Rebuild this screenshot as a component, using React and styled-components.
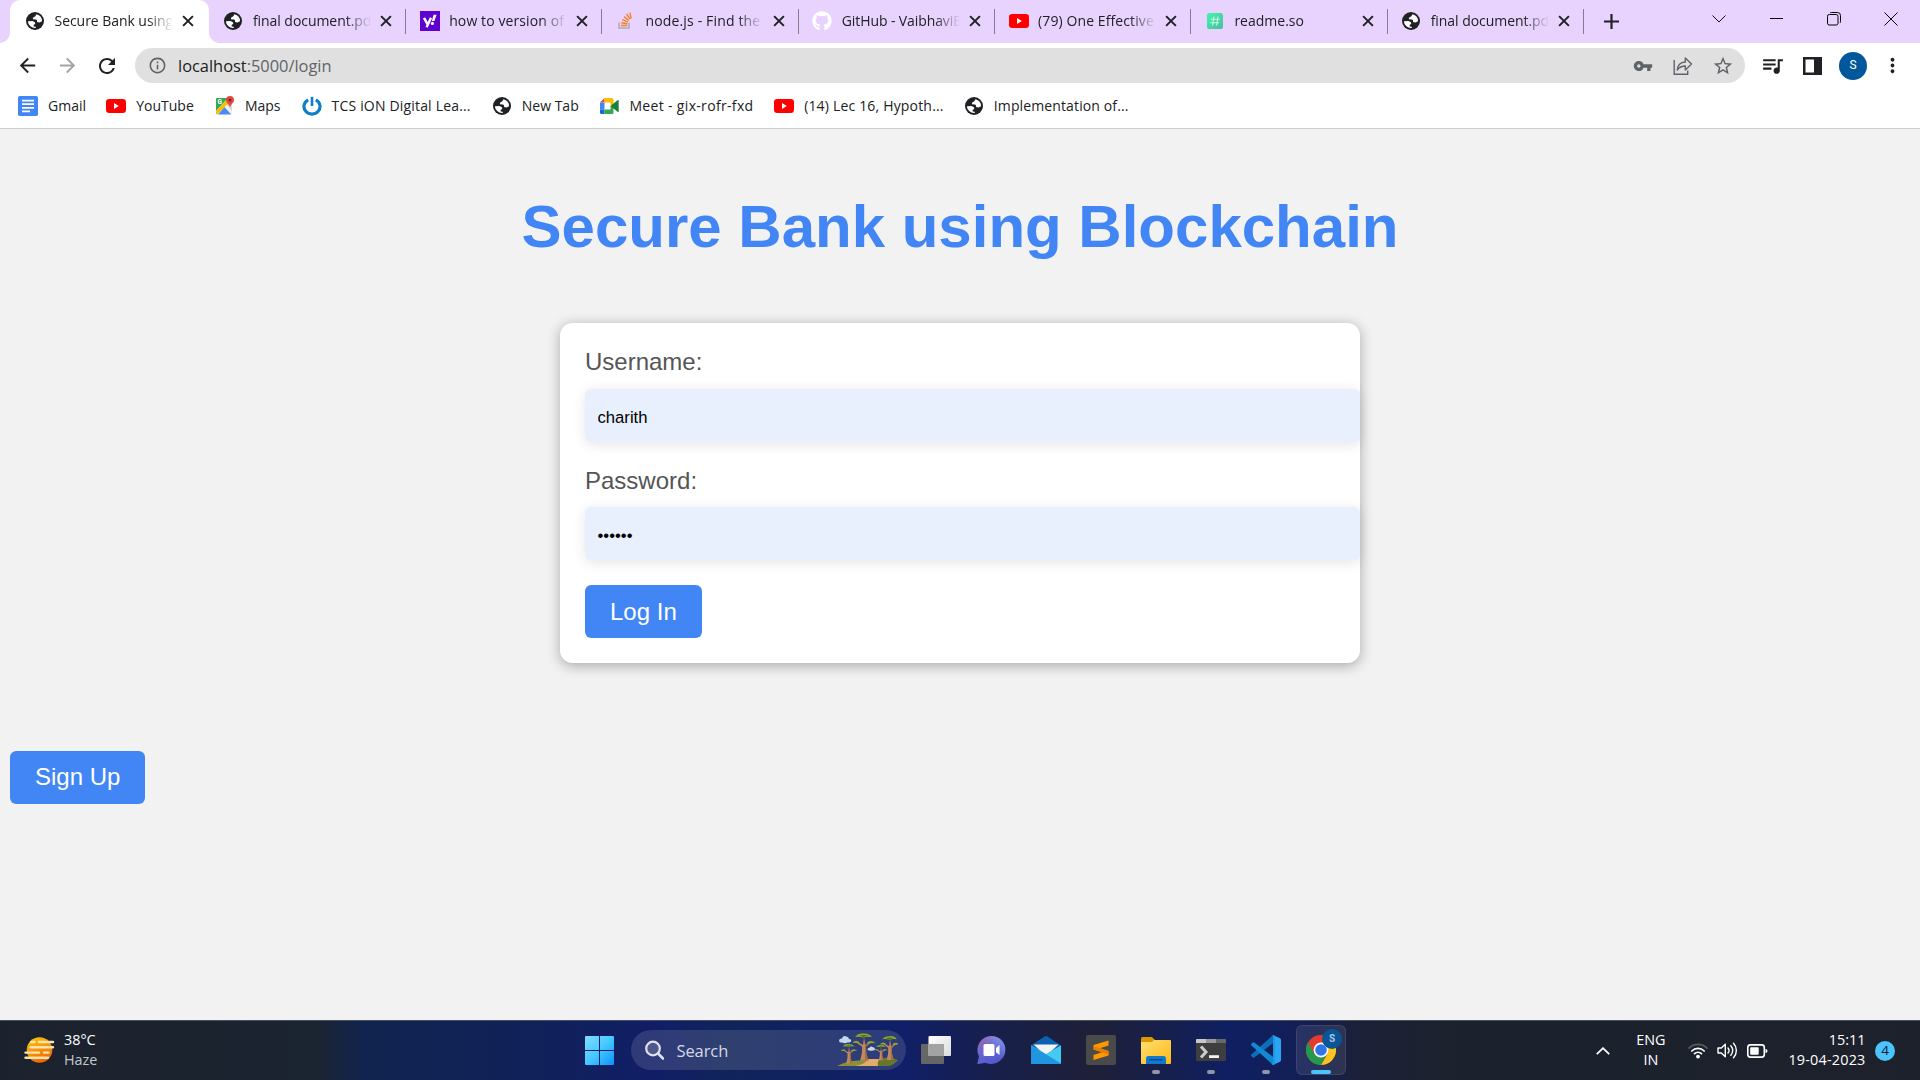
import React from "react";
import styled, { createGlobalStyle } from "styled-components";
import {
  MdArrowBack,
  MdArrowForward,
  MdRefresh,
  MdInfoOutline,
  MdVpnKey,
  MdStarBorder,
  MdQueueMusic,
  MdMoreVert,
} from "react-icons/md";
import { FaGithub } from "react-icons/fa";

const GlobalStyle = createGlobalStyle`
  * { box-sizing: border-box; }
  body { margin: 0; overflow: hidden; background: #f2f2f2; }
`;

const ui = `"Open Sans", "Noto Sans", sans-serif`;
const arial = `Arial, "Liberation Sans", sans-serif`;

/* ---------- window ---------- */

const Window = styled.div`
  width: 1920px;
  height: 1080px;
  display: flex;
  flex-direction: column;
  overflow: hidden;
  font-family: ${ui};
`;

/* ---------- tab strip ---------- */

const TabStrip = styled.div`
  height: 43px;
  flex: none;
  display: flex;
  background: #e8d3fe;
  padding-left: 10px;
`;

const Tab = styled.div`
  position: relative;
  width: ${(p) => (p.$active ? 199.4 : 196.3)}px;
  flex: none;
  display: flex;
  align-items: center;
  padding: 0 14px 2px ${(p) => (p.$active ? 15 : 14)}px;
  background: ${(p) => (p.$active ? "#fff" : "transparent")};
  border-radius: 10px 10px 0 0;

  ${(p) =>
    p.$active
      ? `
    &::before, &::after {
      content: "";
      position: absolute;
      bottom: 0;
      width: 10px;
      height: 10px;
    }
    &::before { left: -10px; background: radial-gradient(circle at 0 0, transparent 9.5px, #fff 10px); }
    &::after { right: -10px; background: radial-gradient(circle at 100% 0, transparent 9.5px, #fff 10px); }
  `
      : `
    &::after {
      content: "";
      position: absolute;
      right: -0.5px;
      top: 9px;
      width: 1px;
      height: 25px;
      background: #877b94;
    }
  `}
`;

const Favicon = styled.span`
  width: 20px;
  height: 20px;
  flex: none;
  display: flex;
  align-items: center;
  justify-content: center;
`;

const TabTitle = styled.span`
  margin-left: 9.500px;
  width: 118px;
  flex: none;
  overflow: hidden;
  white-space: nowrap;
  font-size: 14px;
  line-height: 22px;
  letter-spacing: ${(p) => p.$spacing || 0}px;
  color: #202124;
  mask-image: linear-gradient(to right, #000 ${(p) => (p.$fade ? "78%" : "100%")}, transparent 100%);
`;

const TabClose = styled.span`
  margin-left: 9.300px;
  width: 12px;
  display: flex;
`;

const NewTab = styled.div`
  width: 56px;
  display: flex;
  align-items: center;
  justify-content: center;
  padding-bottom: 1px;
`;

const WindowControls = styled.div`
  margin-left: auto;
  display: flex;
  height: 37px;
`;

const ControlButton = styled.div`
  width: 57.3px;
  display: flex;
  align-items: center;
  justify-content: center;
`;

/* ---------- toolbar ---------- */

const Toolbar = styled.div`
  height: 45px;
  flex: none;
  display: flex;
  align-items: center;
  background: #fff;
  padding: 0 8px 0 7px;
`;

const ToolButton = styled.span`
  width: ${(p) => p.$w || 40}px;
  height: 40px;
  flex: none;
  display: flex;
  align-items: center;
  justify-content: center;
  color: ${(p) => p.$color || "#202124"};
`;

const Omnibox = styled.div`
  margin-left: 8px;
  width: 1610px;
  height: 35px;
  flex: none;
  border-radius: 18px;
  background: #e0e0e0;
  display: flex;
  align-items: center;
  padding: 0 2px 0 1px;
`;

const Address = styled.span`
  flex: 1;
  font-size: 16.4px;
  line-height: 22px;
  color: #5f6368;
  b { font-weight: 400; color: #202124; }
`;

const Avatar = styled.span`
  width: 28px;
  height: 28px;
  border-radius: 50%;
  background: #01579b;
  color: #fff;
  font: 12px/27px Roboto, sans-serif;
  text-align: center;
`;

/* ---------- bookmarks ---------- */

const BookmarkBar = styled.div`
  height: 41px;
  flex: none;
  display: flex;
  align-items: center;
  gap: 19.700px;
  background: #fff;
  border-bottom: 1px solid #cfcfcf;
  padding: 0 0 5px 18px;
`;

const Bookmark = styled.div`
  display: flex;
  align-items: center;
  gap: 10px;
`;

const BookmarkLabel = styled.span`
  width: ${(p) => p.$w}px;
  white-space: nowrap;
  font-size: 14px;
  line-height: 22px;
  letter-spacing: ${(p) => p.$spacing || 0}px;
  color: #202124;
`;

/* ---------- page ---------- */

const Page = styled.main`
  flex: 1;
  background: #f2f2f2;
  padding: 0 10px;
  font-family: ${arial};
  display: flex;
  flex-direction: column;
  align-items: flex-start;
`;

const Heading = styled.h1`
  margin: 63px 0 61px;
  align-self: center;
  font-size: 60px;
  line-height: 70px;
  font-weight: 700;
  color: #4286f5;
  white-space: nowrap;
`;

const Card = styled.form`
  align-self: center;
  width: 800px;
  height: 340px;
  padding: 25px 0 0 25px;
  border-radius: 12.5px;
  background: #fff;
  box-shadow: 0 2.5px 12.5px rgba(0, 0, 0, 0.3);
  display: flex;
  flex-direction: column;
  align-items: flex-start;
`;

const Label = styled.label`
  font-size: 24px;
  line-height: 28px;
  color: #555;
  margin-bottom: ${(p) => p.$bottom}px;
`;

const Input = styled.input`
  width: 775px;
  height: 53px;
  margin: 0 0 25px;
  padding: 15px 12.5px 11px;
  border: 0;
  outline: 0;
  border-radius: 6.25px;
  background: #e8effd;
  box-shadow: 0 2.5px 12.5px rgba(0, 0, 0, 0.1);
  font: 16.67px ${arial};
  color: #000;
`;

const Button = styled.button`
  height: 53px;
  padding: 0 25px ${(p) => p.$lift || 0}px;
  border: 0;
  border-radius: 6.25px;
  background: #4286f5;
  color: #fff;
  font: 24px/28px ${arial};
  margin-top: ${(p) => p.$top || 0}px;
`;

/* ---------- taskbar ---------- */

const Taskbar = styled.footer`
  height: 60px;
  flex: none;
  display: flex;
  align-items: stretch;
  border-top: 1px solid #45505e;
  background: linear-gradient(
    to right,
    #1c222d 0%,
    #1b2431 16.5%,
    #11244f 19%,
    #11215a 28%,
    #111e66 34%,
    #11245a 38%,
    #101f68 47%,
    #18204a 52%,
    #1f2038 57%,
    #182049 60%,
    #0f1f62 64%,
    #131f54 68%,
    #1c2036 71%,
    #1b222d 76%,
    #1d212b 100%
  );
`;

const Weather = styled.div`
  width: 585px;
  padding-left: 24px;
  display: flex;
  align-items: center;
  gap: 9px;
`;

const Stack = styled.div`
  display: flex;
  flex-direction: column;
  align-items: ${(p) => p.$align || "flex-start"};
  width: ${(p) => (p.$w ? `${p.$w}px` : "auto")};
  margin-right: ${(p) => p.$right || 0}px;
  font-size: 14.4px;
  line-height: 20px;
  padding-bottom: 1px;
  color: #fff;
  white-space: nowrap;
`;

const Line = styled.span`
  letter-spacing: ${(p) => p.$spacing || 0}px;
  color: ${(p) => (p.$dim ? "#c3c6cb" : "#fff")};
`;

const StartButton = styled.div`
  width: 29px;
  display: flex;
  align-items: center;
`;

const Search = styled.div`
  width: 275px;
  height: 40px;
  margin: 9px 0 0 17px;
  padding: 0 8px 0 14px;
  border-radius: 20px;
  background: rgba(255, 255, 255, 0.13);
  display: flex;
  align-items: center;
`;

const SearchText = styled.span`
  flex: 1;
  margin-left: 12.500px;
  padding-top: 1px;
  font-size: 16.5px;
  line-height: 22px;
  letter-spacing: -0.1px;
  color: #d5d9e6;
`;

const Apps = styled.div`
  display: flex;
  gap: 5px;
  padding: 4px 0 5px;
  margin-left: 5px;
`;

const AppTile = styled.div`
  position: relative;
  width: 50px;
  display: flex;
  align-items: center;
  justify-content: center;
  border-radius: 6px;
  border: 1px solid ${(p) => (p.$active ? "rgba(255,255,255,0.09)" : "transparent")};
  background: ${(p) => (p.$active ? "rgba(255,255,255,0.09)" : "transparent")};

  &::after {
    content: "";
    display: ${(p) => (p.$open || p.$active ? "block" : "none")};
    position: absolute;
    bottom: 0;
    left: 50%;
    transform: translateX(-50%);
    width: ${(p) => (p.$active ? 20 : 8)}px;
    height: 4px;
    border-radius: 2px;
    background: ${(p) => (p.$active ? "#4cc2ff" : "#9095aa")};
  }
`;

const ProfileBadge = styled.span`
  position: absolute;
  top: 3px;
  right: 3px;
  width: 20px;
  height: 20px;
  border-radius: 50%;
  background: #0a5596;
  color: #a5c5e0;
  font: 700 10px/20px Roboto, sans-serif;
  text-align: center;
`;

const Tray = styled.div`
  margin-left: auto;
  padding-right: 25px;
  display: flex;
  align-items: center;
`;

const TrayIcons = styled.div`
  display: flex;
  align-items: center;
  gap: 9px;
  width: 100.500px;
`;

const Notifications = styled.span`
  width: 20px;
  height: 20px;
  margin-left: 9.5px;
  border-radius: 50%;
  background: #4cc2ff;
  color: #10202c;
  font-size: 13.5px;
  line-height: 19px;
  text-align: center;
`;

const Chevron = styled.span`
  width: 14px;
  margin-right: 26px;
  display: flex;
`;

/* ---------- icons ---------- */

const Globe = () => (
  <svg width="18" height="18" viewBox="0 0 20 20">
    <circle cx="10" cy="10" r="10" fill="#202124" />
    <path
      d="M11.6 2.4 10.4 4.8 8 6.1 7.6 8.1 11.3 8.3 12.3 9.4 12.2 11.2 15 11.6 17.8 10.3A7.9 7.9 0 0 0 11.6 2.4Z"
      fill="#fff"
    />
    <path
      d="M2.1 10.2 7.2 10 9.9 11.4 10.3 13.2 8.5 14.2 8.6 16 10.6 16.4 11 17.8A7.9 7.9 0 0 1 2.1 10.2Z"
      fill="#fff"
    />
  </svg>
);

const YouTube = () => (
  <svg width="20" height="20" viewBox="0 0 20 20">
    <rect y="3" width="20" height="14" rx="3.2" fill="#f00" />
    <path d="M8 7.1v5.8l4.8-2.9z" fill="#fff" />
  </svg>
);

const Yahoo = () => (
  <svg width="20" height="20" viewBox="0 0 20 20">
    <path fill="#5f01d1" d="M0 0h20v20H0z" />
    <path d="M4 6.8 7.5 13.2M11 6.8 6.6 16.3" stroke="#fff" strokeWidth="2.4" fill="none" />
    <path d="M13.6 3.8h3l-2.2 6.2h-2.6z" fill="#fff" />
    <circle cx="12.4" cy="12.4" r="1.6" fill="#fff" />
  </svg>
);

const StackOverflow = () => (
  <svg width="15" height="17" viewBox="0 0 15 17">
    <path d="M1 10.5V16h10v-5.5" fill="none" stroke="#b2a9ad" strokeWidth="1.5" />
    <path
      d="M3 13.5h6.2M3.3 10.7l6.1 1M4.2 7.6l5.7 2.3M6 4.6l4.8 3.9M8.6 2l3.4 5.2M12 .6l1 6"
      stroke="#f48024"
      strokeWidth="1.4"
    />
  </svg>
);

const Readme = () => (
  <svg width="16" height="16" viewBox="0 0 16 16">
    <defs>
      <linearGradient id="readme" x1="0" y1="0" x2="1" y2="1">
        <stop offset="0" stopColor="#3ff5ad" />
        <stop offset="1" stopColor="#4dbd9d" />
      </linearGradient>
    </defs>
    <rect width="16" height="16" rx="2.6" fill="url(#readme)" />
    <path d="M7 3.5 5.6 12.5M11 3.5 9.6 12.5M3.8 6.3h9M3.2 9.7h9" stroke="#c5fbe5" strokeWidth="1.1" />
  </svg>
);

const Docs = () => (
  <svg width="20" height="20" viewBox="0 0 20 20">
    <rect width="20" height="20" rx="1.8" fill="#4285f4" />
    <path d="M4 4.6h12M4 8.2h12M4 11.8h12M4 15.3h8" stroke="#fff" strokeWidth="1.7" />
  </svg>
);

const Maps = () => (
  <svg width="19" height="20" viewBox="0 0 19 20">
    <path d="M1.5 2H13L1 15V2.6z" fill="#34a853" />
    <path d="M13 2 17 6v12L9.5 10z" fill="#d6d8da" />
    <path d="M1 15 11 4.4l2.8 2.8L2.5 18.6 1 18z" fill="#fbbc05" />
    <path d="M3 18.6 9.6 11l6.800 7.600z" fill="#4a8af4" />
    <path d="M9.6 11 16.8 18.6 17.5 16 11.5 8.7z" fill="#f1f1f1" />
    <text x="2.4" y="8.2" fontSize="6.5" fontWeight="700" fontFamily="Roboto" fill="#fff">G</text>
    <path d="M15 0a4 4 0 0 0-4 4c0 3 3.2 3.8 4 7.6C15.800 7.800 19 7 19 4a4 4 0 0 0-4-4z" fill="#e04a3f" />
    <circle cx="15" cy="4" r="1.5" fill="#8a1f17" />
  </svg>
);

const TcsIon = () => (
  <svg width="20" height="20" viewBox="0 0 20 20">
    <path d="M6.200 3.800A8 7.600 0 1 0 13.800 3.800" fill="none" stroke="#0f80c8" strokeWidth="3.200" />
    <path d="M10 .8v9.200" stroke="#0f80c8" strokeWidth="2.600" />
  </svg>
);

const Meet = () => (
  <svg width="19" height="16" viewBox="0 0 19 16">
    <path d="M0 4.500 4.500 0V4.500z" fill="#ea4335" />
    <path d="M0 4.500h4.500v7H0z" fill="#4285f4" />
    <path d="M0 11.500h4.500V16H1.500A1.500 1.500 0 0 1 0 14.500z" fill="#1967d2" />
    <path d="M4.500 0H12a1.500 1.500 0 0 1 1.500 1.500v6h-3v-3h-6z" fill="#fbbc04" />
    <path d="M4.500 11.500h6V8l3 1v5.500A1.500 1.500 0 0 1 12 16H4.500z" fill="#34a853" />
    <path d="M10.500 8 17.500 2.200q1.200-.6 1.200.5v10.600q0 1.100-1.200.5z" fill="#188038" />
  </svg>
);

const Cross = () => (
  <svg width="12" height="12" viewBox="0 0 12 12">
    <path d="M1.100 1.100l9.800 9.800M10.900 1.100 1.100 10.900" stroke="#202124" strokeWidth="2" />
  </svg>
);

const Share = () => (
  <svg width="20" height="20" viewBox="0 0 20 20" fill="none" stroke="#5f6368" strokeWidth="1.400">
    <path d="M1.200 4v14.200h13.500V14.500" />
    <path d="M12.300 2v4C7.500 6.300 4.600 9.200 4.200 14c2.200-3 4.600-4 8.100-4v4l6.200-6z" strokeLinejoin="round" />
  </svg>
);

const SidePanel = () => (
  <svg width="19" height="18" viewBox="0 0 19 18">
    <path d="M0 0h19v18H0z" fill="#202124" />
    <path d="M2.500 2.500h8.500v13H2.500z" fill="#fff" />
  </svg>
);

const Sun = () => (
  <svg width="31" height="28" viewBox="0 0 31 28">
    <defs>
      <linearGradient id="sun" x1="0" y1="0" x2=".4" y2="1">
        <stop offset="0" stopColor="#fccb05" />
        <stop offset="1" stopColor="#ee6a08" />
      </linearGradient>
    </defs>
    <circle cx="15.500" cy="13" r="12.800" fill="url(#sun)" />
    <g stroke="#f8e3ae" strokeWidth="2.400" strokeLinecap="round">
      <path d="M7 5h3.500M15 5h14M6.500 10.300H29M1.500 15.600h13.500M20 15.600h4.500M1.500 20.700H24" />
    </g>
  </svg>
);

const WindowsLogo = () => (
  <svg width="29" height="29" viewBox="0 0 29 29">
    <defs>
      <linearGradient id="win" x1="0" y1="0" x2="1" y2="1">
        <stop offset="0" stopColor="#83dcfc" />
        <stop offset=".5" stopColor="#46c8ff" />
        <stop offset="1" stopColor="#0a93fa" />
      </linearGradient>
    </defs>
    <path
      fill="url(#win)"
      d="M1 0h13v14H0V1a1 1 0 0 1 1-1zM15 0h13a1 1 0 0 1 1 1v13H15zM0 15h14v14H1a1 1 0 0 1-1-1zM15 15h14v13a1 1 0 0 1-1 1H15z"
    />
  </svg>
);

const SearchIcon = () => (
  <svg width="19" height="20" viewBox="0 0 19 20" fill="none" stroke="#dfe2ee">
    <circle cx="8" cy="8.500" r="6.800" strokeWidth="2.200" fill="rgba(255,255,255,.15)" />
    <path d="M13 13.500l5 5" strokeWidth="2.600" strokeLinecap="round" />
  </svg>
);

const Baobab = ({ x, y, s }) => (
  <g transform={`translate(${x} ${y}) scale(${s})`}>
    <path d="M-4 22Q-1.500 14-2 8L-7 4l1-.6L-1 6 0-2l1.200 8L6 3l1 .6L2 8q-.5 7 2.500 14z" fill="#c08a5c" />
    <path d="M1 0 1.200 6 6 3l1 .6L2 8q-.5 7 2.500 14H1z" fill="#a36d45" />
    <path d="M-9-2q3-4 8-3.500 6-1 9 3.500-5-1-8.500.5Q-5-3-9-2zM-12 4q3-4 7-1 1 1.500-.5 1.600-3-1-6.500-.6zM3 3.500q4-3.500 9 .8-4-.6-8 .6z" fill="#8aa82a" />
    <path d="M-5-3q4-2 10 0-5 0-5 1.500Q-2-3-5-3z" fill="#536f17" />
  </g>
);

const Savanna = () => (
  <svg width="61" height="34" viewBox="0 0 61 34">
    <path d="M0 33Q10 27 30 27t30 0v0l-8 6z" fill="#8a9136" />
    <path d="M42 26Q52 23 61 27q-4 5-9 6H40z" fill="#66762a" />
    <path d="M18 33q12-2 12-7h12q-2 4-1 7z" fill="#e3ac68" />
    <Baobab x={12} y={15} s={0.7} />
    <Baobab x={44} y={15} s={0.56} />
    <Baobab x={27} y={6} s={0.98} />
    <Baobab x={53} y={8} s={0.86} />
    <g fill="#c2d8ee">
      <path d="M2 8q0-3 3-2.500Q6 2 9.500 3.500 12 4 12 6q3 0 2 2.500-1 1.500-3 .8Q8 11 5 9.500 2.500 10 2 8z" />
      <path d="M30.500 16.500q0-2 2-1.800 1.200-1.800 3-.6 2.500.4 2.500 2 0 1.500-2 1.300-2.500.8-3.500 0-2 0-2-.9z" />
    </g>
  </svg>
);

const TaskView = () => (
  <svg width="30" height="28" viewBox="0 0 30 28">
    <defs>
      <linearGradient id="tv" x1="0" y1="0" x2="1" y2="1">
        <stop offset="0" stopColor="#fff" />
        <stop offset="1" stopColor="#dcdcdc" />
      </linearGradient>
    </defs>
    <rect y="8" width="23" height="20" rx="1" fill="#666" />
    <rect x="7.500" width="22.500" height="20" rx="1" fill="url(#tv)" />
    <path d="M7.500 8H23v12H7.500z" fill="#a3a3a3" />
  </svg>
);

const Chat = () => (
  <svg width="29" height="28" viewBox="0 0 29 28">
    <defs>
      <linearGradient id="chat" x1="0" y1="0" x2=".6" y2="1">
        <stop offset="0" stopColor="#b0669f" />
        <stop offset=".45" stopColor="#6c67cf" />
        <stop offset="1" stopColor="#5058cc" />
      </linearGradient>
      <linearGradient id="chatb" x1="0" y1="1" x2="1" y2="0">
        <stop offset=".5" stopColor="#7b8ff0" stopOpacity="0" />
        <stop offset="1" stopColor="#8aa5f3" />
      </linearGradient>
    </defs>
    <path d="M14.500 0a14 14 0 1 1-6 26.800L1.500 28Q0 28 .5 26.500L2 20.500A14 14 0 0 1 14.500 0z" fill="url(#chat)" />
    <circle cx="14.500" cy="14" r="14" fill="url(#chatb)" />
    <rect x="6.500" y="8" width="11" height="12" rx="1.600" fill="#fff" />
    <path d="M19 12 22.500 9v10L19 16.200z" fill="#fff" />
  </svg>
);

const Mail = () => (
  <svg width="30" height="28" viewBox="0 0 30 28">
    <path d="M0 9.500 13.500.6q1.500-1 3 0L30 9.500 15 20z" fill="#0b62b0" />
    <path d="M2.500 8.500h25L15 20z" fill="#f4f4f4" />
    <path d="M0 9.200 15 18 30 9.200V27a1 1 0 0 1-1 1H1a1 1 0 0 1-1-1z" fill="#43cbf2" />
    <path d="M0 9.200 30 27.500a1 1 0 0 1-1 .5H1a1 1 0 0 1-1-1z" fill="#2196e0" />
  </svg>
);

const Sublime = () => (
  <svg width="30" height="30" viewBox="0 0 30 30">
    <rect width="30" height="30" rx="2" fill="#4a4a4a" />
    <path d="M22.500 5.500v5L14 13.200l8.500 2.800v4.500L7.500 25v-5l8.500-2.700-8.500-2.800V10z" fill="#ff9800" />
    <path d="M7.500 14.500 16 17.300 22.500 19.300V16L14 13.200 8 11.500z" fill="#e87f00" />
  </svg>
);

const Folder = () => (
  <svg width="30" height="27" viewBox="0 0 30 27">
    <defs>
      <linearGradient id="fold" x1="0" y1="0" x2="1" y2="1">
        <stop offset="0" stopColor="#ffdf70" />
        <stop offset="1" stopColor="#fcb917" />
      </linearGradient>
    </defs>
    <path d="M0 1.500Q0 0 1.500 0H10q1 0 2 1l2 2v4H0z" fill="#dc9700" />
    <path d="M0 5h11l2-2h16q1 0 1 1v22q0 1-1 1H1q-1 0-1-1z" fill="url(#fold)" />
    <path d="M5 27v-5.500Q5 19 7.500 19h15Q25 19 25 21.500V27z" fill="#1079cc" />
    <path d="M8.500 22.700h13" stroke="#074b8d" strokeWidth="1.500" />
  </svg>
);

const Terminal = () => (
  <svg width="30" height="22" viewBox="0 0 30 22">
    <rect width="30" height="22" rx="1.500" fill="#3e3e3e" />
    <path d="M1 0h9v4H0V1q0-1 1-1z" fill="#c8c8c8" />
    <path d="M10 0h10v4H10z" fill="#999" />
    <path d="M20 0h9q1 0 1 1v3H20z" fill="#686868" />
    <path d="M5 7.500 10 13l-5 5.500" fill="none" stroke="#ccc" strokeWidth="3" />
    <path d="M13 17.600h10" stroke="#f2f2f2" strokeWidth="2.800" />
  </svg>
);

const VSCode = () => (
  <svg width="30" height="30" viewBox="0 0 30 30">
    <path d="M22 0 29 3.200Q30 3.700 30 5v20q0 1.300-1 1.800L22 30z" fill="#2aa5f2" />
    <path d="M22 0v8.200L3.200 22.400Q2.300 23 1.500 22.300L.4 21.200q-.8-.8 0-1.600z" fill="#0a70b8" />
    <path d="M22 30v-8.200L3.200 7.600Q2.300 7 1.500 7.700L.4 8.800q-.8.8 0 1.600z" fill="#1088d4" />
    <path d="M22 0 24 1v28l-2 1-1.500-1L22 27z" fill="#1e97e8" />
  </svg>
);

const Chrome = () => (
  <svg width="30" height="30" viewBox="0 0 30 30">
    <circle cx="15" cy="15" r="15" fill="#e33b2e" />
    <path d="M15 30A15 15 0 0 0 28 7.500H15L21.500 18.700z" fill="#fcc31e" />
    <path d="M2 7.500A15 15 0 0 0 15 30L21.500 18.700A7.500 7.500 0 0 1 8.500 18.700z" fill="#229a4b" />
    <circle cx="15" cy="15" r="7.400" fill="#fff" />
    <circle cx="15" cy="15" r="5.800" fill="#2f74e8" />
  </svg>
);

const Wifi = () => (
  <svg width="20" height="16" viewBox="0 0 20 16" fill="none" strokeWidth="1.700" strokeLinecap="round">
    <path d="M1 5.200a12.700 12.700 0 0 1 18 0" stroke="#555b64" />
    <path d="M3.800 8a8.800 8.800 0 0 1 12.400 0M6.500 10.700a5 5 0 0 1 7 0" stroke="#fff" />
    <circle cx="10" cy="13.600" r="1.900" fill="#fff" />
  </svg>
);

const Volume = () => (
  <svg width="21" height="17" viewBox="0 0 21 17" fill="none" stroke="#fff" strokeWidth="1.400" strokeLinecap="round">
    <path d="M1 6h3.300L8.300 2.300v12.400L4.300 11H1z" strokeLinejoin="round" />
    <path d="M11 6a3.800 3.800 0 0 1 0 5M13.800 3.700a7 7 0 0 1 0 9.600M16.500 1.300a10.500 10.500 0 0 1 0 14.400" />
  </svg>
);

const Battery = () => (
  <svg width="21" height="14" viewBox="0 0 21 14">
    <rect x=".8" y=".9" width="16.500" height="12.200" rx="2.600" fill="none" stroke="#fff" strokeWidth="1.600" />
    <rect x="3.200" y="3.300" width="8.500" height="7.400" rx=".8" fill="#fff" />
    <path d="M18.500 5q2 0 2 2t-2 2z" fill="#fff" />
  </svg>
);

/* ---------- content ---------- */

const tabs = [
  { title: "Secure Bank using Blockchain", icon: <Globe />, active: true, spacing: -0.05 },
  { title: "final document.pdf", icon: <Globe />, spacing: -0.05 },
  { title: "how to version of npm", icon: <Yahoo />, spacing: 0.1 },
  { title: "node.js - Find the version", icon: <StackOverflow />, spacing: 0.15 },
  { title: "GitHub - VaibhaviB/bank", icon: <FaGithub size={20} color="#fff" />, spacing: -0.1 },
  { title: "(79) One Effective way", icon: <YouTube />, spacing: 0.1 },
  { title: "readme.so", icon: <Readme />, short: true },
  { title: "final document.pdf", icon: <Globe />, spacing: -0.05 },
];

const bookmarks = [
  { label: "Gmail", w: 38.5, icon: <Docs /> },
  { label: "YouTube", w: 59, icon: <YouTube /> },
  { label: "Maps", w: 37, icon: <Maps /> },
  { label: "TCS iON Digital Lea...", w: 140.5, spacing: 0.18, icon: <TcsIon /> },
  { label: "New Tab", w: 58, icon: <Globe /> },
  { label: "Meet - gix-rofr-fxd", w: 125, spacing: 0.33, icon: <Meet /> },
  { label: "(14) Lec 16, Hypoth...", w: 140, spacing: 0.18, icon: <YouTube /> },
  { label: "Implementation of...", w: 135, spacing: 0.12, icon: <Globe /> },
];

const apps = [
  { name: "tasks", icon: <TaskView /> },
  { name: "chat", icon: <Chat /> },
  { name: "mail", icon: <Mail /> },
  { name: "sublime", icon: <Sublime /> },
  { name: "files", icon: <Folder />, open: true },
  { name: "terminal", icon: <Terminal />, open: true },
  { name: "code", icon: <VSCode />, open: true },
  { name: "chrome", icon: <Chrome />, active: true },
];

export default function App() {
  return (
    <Window>
      <GlobalStyle />
      <TabStrip>
        {tabs.map((t, i) => (
          <Tab key={i} $active={t.active}>
            <Favicon>{t.icon}</Favicon>
            <TabTitle $fade={!t.short} $spacing={t.spacing}>{t.title}</TabTitle>
            <TabClose><Cross /></TabClose>
          </Tab>
        ))}
        <NewTab>
          <svg width="15" height="15" viewBox="0 0 15 15">
            <path d="M7.500 0v15M0 7.500h15" stroke="#202124" strokeWidth="2.200" />
          </svg>
        </NewTab>
        <WindowControls>
          <ControlButton>
            <svg width="14" height="8" viewBox="0 0 14 8" fill="none" stroke="#111" strokeWidth="1">
              <path d="M.5.5 7 7 13.500.5" />
            </svg>
          </ControlButton>
          <ControlButton>
            <svg width="13" height="2" viewBox="0 0 13 2"><path d="M0 .5h13" stroke="#000" /></svg>
          </ControlButton>
          <ControlButton>
            <svg width="14" height="14" viewBox="0 0 14 14" fill="none" stroke="#000">
              <rect x=".5" y="2.500" width="10.500" height="10.500" rx="1.800" />
              <path d="M3 .9Q3.500.5 4.500.5H10.500q3 0 3 3V9.500q0 1-.6 1.500" />
            </svg>
          </ControlButton>
          <ControlButton>
            <svg width="14" height="14" viewBox="0 0 14 14" stroke="#000" strokeWidth="1">
              <path d="M.5.5l13 13M13.500.5l-13 13" />
            </svg>
          </ControlButton>
        </WindowControls>
      </TabStrip>

      <Toolbar>
        <ToolButton><MdArrowBack size={23} /></ToolButton>
        <ToolButton $color="#a3a4a6"><MdArrowForward size={23} /></ToolButton>
        <ToolButton><MdRefresh size={24} /></ToolButton>
        <Omnibox>
          <ToolButton $w={42} $color="#5f6368"><MdInfoOutline size={19} /></ToolButton>
          <Address><b>localhost</b>:5000/login</Address>
          <ToolButton $color="#5f6368"><MdVpnKey size={20} /></ToolButton>
          <ToolButton $color="#5f6368"><Share /></ToolButton>
          <ToolButton $color="#5f6368"><MdStarBorder size={22} /></ToolButton>
        </Omnibox>
        <ToolButton $w={54}><MdQueueMusic size={25} /></ToolButton>
        <ToolButton $w={27}><SidePanel /></ToolButton>
        <ToolButton $w={54}><Avatar>S</Avatar></ToolButton>
        <ToolButton $w={25}><MdMoreVert size={23} /></ToolButton>
      </Toolbar>

      <BookmarkBar>
        {bookmarks.map((b) => (
          <Bookmark key={b.label}>
            <Favicon>{b.icon}</Favicon>
            <BookmarkLabel $w={b.w} $spacing={b.spacing}>{b.label}</BookmarkLabel>
          </Bookmark>
        ))}
      </BookmarkBar>

      <Page>
        <Heading>Secure Bank using Blockchain</Heading>
        <Card>
          <Label $bottom={13}>Username:</Label>
          <Input type="text" defaultValue="charith" />
          <Label $bottom={12}>Password:</Label>
          <Input type="password" defaultValue="secret" />
          <Button type="button">Log In</Button>
        </Card>
        <Button $top={88} $lift={2} type="button">Sign Up</Button>
      </Page>

      <Taskbar>
        <Weather>
          <Sun />
          <Stack>
            <Line>38°C</Line>
            <Line $dim>Haze</Line>
          </Stack>
        </Weather>
        <StartButton><WindowsLogo /></StartButton>
        <Search>
          <SearchIcon />
          <SearchText>Search</SearchText>
          <Savanna />
        </Search>
        <Apps>
          {apps.map((a) => (
            <AppTile key={a.name} $open={a.open} $active={a.active}>
              {a.icon}
              {a.active && <ProfileBadge>S</ProfileBadge>}
            </AppTile>
          ))}
        </Apps>
        <Tray>
          <Chevron>
            <svg width="14" height="8" viewBox="0 0 14 8" fill="none" stroke="#fff" strokeWidth="1.800">
              <path d="M.8 7.200 7 1.200l6.200 6" />
            </svg>
          </Chevron>
          <Stack $align="center" $w={30} $right={22}>
            <Line>ENG</Line>
            <Line>IN</Line>
          </Stack>
          <TrayIcons>
            <Wifi />
            <Volume />
            <Battery />
          </TrayIcons>
          <Stack $align="flex-end">
            <Line>15:11</Line>
            <Line $spacing={0.2}>19-04-2023</Line>
          </Stack>
          <Notifications>4</Notifications>
        </Tray>
      </Taskbar>
    </Window>
  );
}
